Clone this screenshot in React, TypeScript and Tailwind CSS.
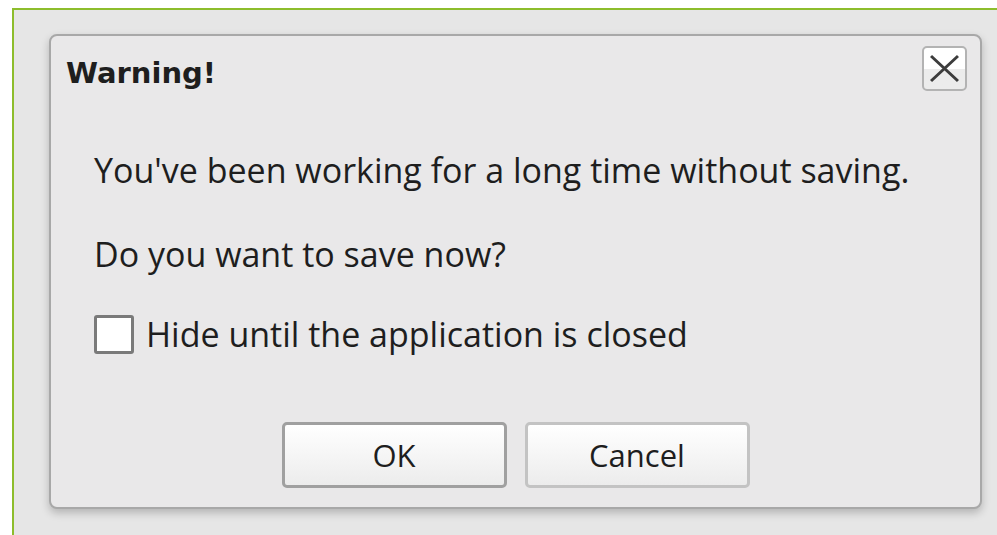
export default function App() {
  const font = { fontFamily: '"Open Sans", Roboto, sans-serif' };
  const titleFont = { fontFamily: '"DejaVu Sans", Verdana, sans-serif' };

  return (
    <div className="h-[535px] w-[997px] overflow-hidden bg-white pl-3 pt-2" style={font}>
      <div className="h-[527px] border-l-2 border-t-2 border-[#8dbd2c] bg-[#e6e6e6] pl-[35px] pt-[24px]">
        <div className="flex h-[475px] w-[933px] flex-col rounded-lg border-2 border-[#a8a8a8] bg-[#e9e8e9] shadow-[0_4px_8px_rgba(0,0,0,0.22)]">
          {/* title bar */}
          <div className="flex items-start justify-between pl-[15px] pr-[13px] pt-[10px]">
            <span className="mt-[9px] text-[29px] font-bold leading-[36px] text-[#1e1e1e]" style={titleFont}>
              Warning!
            </span>
            <button className="flex h-[45px] w-[45px] items-center justify-center rounded-[5px] border-2 border-[#b3b3b3] bg-gradient-to-b from-white from-50% to-[#ececec] to-50%">
              <svg width="29" height="29" viewBox="0 0 29 29">
                <path d="M1 2 L28 27 M28 2 L1 27" stroke="#3c3c3c" strokeWidth="3" />
              </svg>
            </button>
          </div>

          {/* message */}
          <div className="pl-[43px] pt-[58px] text-[34px] leading-[42px] text-[#1e1e1e]">
            <p>You've been working for a long time without saving.</p>
            <p className="mt-[42px]">Do you want to save now?</p>
            <label className="mt-[38px] flex items-center gap-[12px]">
              <span className="h-[39px] w-[40px] rounded-[3px] border-[3px] border-[#7a7a7a] bg-white" />
              <span>Hide until the application is closed</span>
            </label>
          </div>

          {/* buttons */}
          <div className="mt-auto flex justify-center gap-[18px] pb-[19px]">
            <button className="h-[66px] w-[225px] rounded-[5px] border-[3px] border-[#a0a0a0] bg-gradient-to-b from-white to-[#ececec] text-[31px] text-[#1e1e1e]">
              OK
            </button>
            <button className="h-[66px] w-[225px] rounded-[5px] border-[3px] border-[#c3c3c3] bg-gradient-to-b from-white to-[#ececec] text-[31px] text-[#1e1e1e]">
              Cancel
            </button>
          </div>
        </div>
      </div>
    </div>
  );
}
